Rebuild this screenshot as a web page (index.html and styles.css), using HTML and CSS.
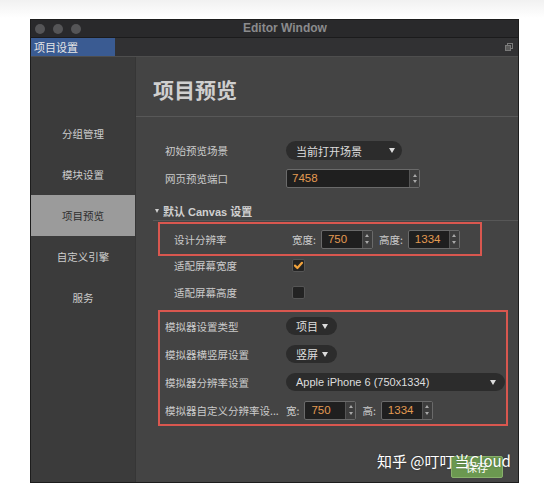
FILE: index.html
```html
<!DOCTYPE html>
<html lang="zh">
<head>
<meta charset="utf-8">
<title>Editor Window</title>
<link rel="stylesheet" href="styles.css">
</head>
<body>
<div class="window">
  <div class="titlebar">
    <div class="lights"><span></span><span></span><span></span></div>
    <div class="title">Editor Window</div>
  </div>
  <div class="tabbar">
    <div class="tab">项目设置</div>
    <svg class="tab-icon" width="8" height="8" viewBox="0 0 8 8"><rect x="2.5" y="0.5" width="5" height="5" fill="none" stroke="#7a7a7a"/><rect x="0.5" y="2.5" width="5" height="5" fill="#5a5a5a" stroke="#7a7a7a"/></svg>
  </div>
  <div class="main">
    <nav class="sidebar">
      <div class="nav-item">分组管理</div>
      <div class="nav-item">模块设置</div>
      <div class="nav-item active">项目预览</div>
      <div class="nav-item">自定义引擎</div>
      <div class="nav-item">服务</div>
    </nav>
    <section class="panel">
      <header class="panel-head"><h1>项目预览</h1></header>
      <div class="panel-body">
        <div class="row">
          <span class="label">初始预览场景</span>
          <div class="select sel-scene"><span>当前打开场景</span><i class="arrow"></i></div>
        </div>
        <div class="row row-gap">
          <span class="label">网页预览端口</span>
          <div class="num num-port"><span class="val">7458</span><span class="spin"><i class="up"></i><i class="down"></i></span></div>
        </div>
        <div class="section-title"><i class="tri"></i>默认 Canvas 设置</div>
        <div class="box box-design">
          <div class="row inbox">
            <span class="label label-w">设计分辨率</span>
            <span class="field-label">宽度:</span>
            <div class="num"><span class="val">750</span><span class="spin"><i class="up"></i><i class="down"></i></span></div>
            <span class="field-label">高度:</span>
            <div class="num"><span class="val">1334</span><span class="spin"><i class="up"></i><i class="down"></i></span></div>
          </div>
        </div>
        <div class="check-row first">
          <span class="label label-w">适配屏幕宽度</span>
          <span class="checkbox"><svg width="11" height="11" viewBox="0 0 11 11"><path d="M2 5.6 L4.4 8 L9 2.8" fill="none" stroke="#f0a23c" stroke-width="2.2" stroke-linecap="round" stroke-linejoin="round"/></svg></span>
        </div>
        <div class="check-row second">
          <span class="label label-w">适配屏幕高度</span>
          <span class="checkbox"></span>
        </div>
        <div class="box box-sim">
          <div class="sim-row">
            <span class="label">模拟器设置类型</span>
            <div class="select sel-small"><span>项目</span><i class="arrow"></i></div>
          </div>
          <div class="sim-row">
            <span class="label">模拟器横竖屏设置</span>
            <div class="select sel-small"><span>竖屏</span><i class="arrow"></i></div>
          </div>
          <div class="sim-row">
            <span class="label">模拟器分辨率设置</span>
            <div class="select sel-device"><span>Apple iPhone 6 (750x1334)</span><i class="arrow"></i></div>
          </div>
          <div class="sim-row">
            <span class="label">模拟器自定义分辨率设...</span>
            <span class="field-label">宽:</span>
            <div class="num"><span class="val">750</span><span class="spin"><i class="up"></i><i class="down"></i></span></div>
            <span class="field-label">高:</span>
            <div class="num"><span class="val">1334</span><span class="spin"><i class="up"></i><i class="down"></i></span></div>
          </div>
        </div>
        <div class="save-wrap"><button class="save">保存</button></div>
      </div>
    </section>
  </div>
  <div class="watermark">知乎 @叮叮当Cloud</div>
</div>
</body>
</html>
```

FILE: styles.css
```css
html, body {
  margin: 0;
  padding: 0;
}
body {
  background: linear-gradient(#f1f1f1, #ffffff 18px);
  font-family: "Liberation Sans", "Noto Sans CJK SC", sans-serif;
  height: 500px;
  overflow: hidden;
}
.window {
  margin: 19px 0 0 30px;
  width: 489px;
  height: 464px;
  box-sizing: border-box;
  border: 1px solid #1d1d1d;
  background: #444444;
  display: flex;
  flex-direction: column;
  position: relative;
}
.titlebar {
  height: 17px;
  background: #29292b;
  border-bottom: 1px solid #1b1b1c;
  display: flex;
  align-items: center;
}
.lights {
  display: flex;
  gap: 8px;
  padding-left: 4px;
}
.lights span {
  width: 10px;
  height: 10px;
  border-radius: 50%;
  background: #555557;
}
.title {
  margin-left: 162px;
  color: #8b8b8d;
  font-weight: bold;
  font-size: 12px;
  line-height: 17px;
}
.tabbar {
  height: 18px;
  background: #313133;
  border-bottom: 1px solid #4e4e4e;
  display: flex;
  justify-content: space-between;
  align-items: center;
}
.tab {
  width: 81px;
  height: 18px;
  background: #3a5b92;
  color: #e6e6e6;
  font-size: 11px;
  line-height: 18px;
  padding-left: 3px;
  font-family: "Noto Sans CJK SC", sans-serif;
}
.tab-icon {
  margin-right: 5px;
}
.main {
  flex: 1;
  display: flex;
  min-height: 0;
}
.sidebar {
  width: 104px;
  background: #3b3b3b;
  border-right: 1px solid #363636;
  padding-top: 56px;
  box-sizing: content-box;
}
.nav-item {
  height: 41px;
  line-height: 41px;
  text-align: center;
  font-size: 10.5px;
  color: #cdcdcd;
  font-family: "Noto Sans CJK SC", sans-serif;
}
.nav-item.active {
  background: #9b9b9b;
  color: #2e2e2e;
}
.panel {
  flex: 1;
  display: flex;
  flex-direction: column;
  background: #444444;
}
.panel-head {
  height: 59px;
  border-bottom: 1px solid #585858;
  padding-left: 17px;
  display: flex;
  align-items: center;
  padding-top: 4px;
  box-sizing: border-box;
  height: 60px;
}
.panel-head h1 {
  margin: 0;
  font-size: 21px;
  font-weight: bold;
  color: #cfcfcf;
  font-family: "Noto Sans CJK SC", sans-serif;
  line-height: 24px;
}
.panel-body {
  padding-top: 24px;
  display: flex;
  flex-direction: column;
}
.row {
  display: flex;
  align-items: center;
  height: 19px;
  padding-left: 29px;
}
.row-gap {
  margin-top: 9px;
}
.label {
  width: 121px;
  flex: none;
  font-size: 10.5px;
  color: #cbcbcb;
  white-space: nowrap;
  font-family: "Noto Sans CJK SC", sans-serif;
}
.label-w {
  width: 118px;
}
.field-label {
  font-size: 10.5px;
  color: #cbcbcb;
  margin-right: 5px;
  font-family: "Noto Sans CJK SC", sans-serif;
}
.select {
  height: 18px;
  border-radius: 9px;
  background: #2c2c2c;
  color: #dedede;
  font-size: 11px;
  display: flex;
  align-items: center;
  justify-content: space-between;
  box-sizing: border-box;
  padding: 0 7px 0 10px;
}
.sel-scene {
  width: 116px;
  height: 19px;
  border-radius: 10px;
}
.sel-small {
  width: 51px;
  justify-content: flex-start;
  gap: 4px;
}
.sel-device {
  width: 219px;
  padding-right: 9px;
}
.arrow {
  width: 0;
  height: 0;
  border-left: 3.5px solid transparent;
  border-right: 3.5px solid transparent;
  border-top: 5px solid #dcdcdc;
}
.num {
  width: 52px;
  height: 19px;
  box-sizing: border-box;
  border: 1px solid #6a6a6a;
  border-radius: 2px;
  background: #1f1f1f;
  display: flex;
  margin-right: 6px;
  flex: none;
}
.num-port {
  width: 134px;
}
.num .val {
  flex: 1;
  color: #e39b52;
  font-size: 11.5px;
  line-height: 17px;
  padding-left: 6px;
}
.num-port .val {
  padding-left: 5px;
}
.num .spin {
  width: 9px;
  border-left: 1px solid #555;
  background: #3d3d3d;
  display: flex;
  flex-direction: column;
  justify-content: space-evenly;
  align-items: center;
}
.up {
  width: 0;
  height: 0;
  border-left: 2.5px solid transparent;
  border-right: 2.5px solid transparent;
  border-bottom: 3px solid #a8a8a8;
}
.down {
  width: 0;
  height: 0;
  border-left: 2.5px solid transparent;
  border-right: 2.5px solid transparent;
  border-top: 3px solid #a8a8a8;
}
.section-title {
  margin: 14px 0 0 17px;
  height: 18px;
  border-bottom: 1px solid #575757;
  padding-left: 2px;
  display: flex;
  align-items: center;
  font-size: 11px;
  font-weight: bold;
  color: #d0d0d0;
}
.tri {
  width: 0;
  height: 0;
  border-left: 2.5px solid transparent;
  border-right: 2.5px solid transparent;
  border-top: 4px solid #d0d0d0;
  margin-right: 4px;
}
.box {
  border: 2px solid #d9574f;
  margin-left: 22px;
  box-sizing: border-box;
}
.box-design {
  margin-top: 1px;
  width: 324px;
  height: 34px;
  display: flex;
  align-items: center;
}
.row.inbox {
  padding-left: 14px;
}
.check-row {
  display: flex;
  align-items: center;
  height: 14px;
  padding-left: 38px;
}
.check-row.first {
  margin-top: 2px;
}
.check-row.second {
  margin-top: 13px;
}
.checkbox {
  width: 13px;
  height: 13px;
  box-sizing: border-box;
  border: 1px solid #555;
  border-radius: 2px;
  background: #232323;
  display: flex;
  align-items: center;
  justify-content: center;
}
.box-sim {
  margin-top: 11px;
  width: 350px;
  height: 116px;
  padding-left: 5px;
}
.sim-row {
  height: 28px;
  display: flex;
  align-items: center;
}
.save-wrap {
  display: flex;
  justify-content: flex-end;
  padding-right: 15px;
  margin-top: 30px;
}
.save {
  width: 52px;
  height: 22px;
  background: #6b9850;
  border: 1px solid #88b06c;
  border-radius: 2px;
  color: #ffffff;
  font-size: 11px;
  font-family: "Noto Sans CJK SC", sans-serif;
  padding: 0;
}
.watermark {
  position: absolute;
  left: 346px;
  top: 432px;
  color: #ffffff;
  font-size: 15px;
  line-height: 18px;
  font-family: "Noto Sans CJK SC", sans-serif;
  text-shadow: 0 0 2px rgba(0, 0, 0, 0.35);
  white-space: nowrap;
}
```
